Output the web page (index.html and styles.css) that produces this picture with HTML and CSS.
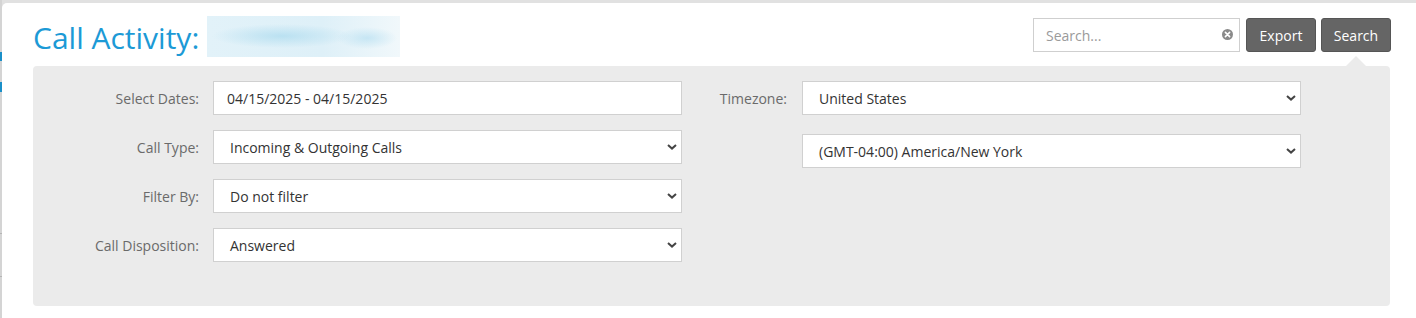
FILE: index.html
```html
<!DOCTYPE html>
<html lang="en">
<head>
<meta charset="utf-8">
<title>Call Activity</title>
<link rel="stylesheet" href="styles.css">
</head>
<body>
<div class="page">
  <div class="gutter">
    <span class="gutter-blue gutter-blue-a"></span>
    <span class="gutter-blue gutter-blue-b"></span>
    <span class="gutter-line gutter-line-a"></span>
    <span class="gutter-line gutter-line-b"></span>
  </div>
  <div class="card">
    <div class="header">
      <div class="title-wrap">
        <h1 class="title">Call Activity:</h1>
        <div class="blurred"></div>
      </div>
      <div class="actions">
        <div class="search-box">
          <input class="search-input" type="text" placeholder="Search...">
          <span class="clear-icon">
            <svg width="11" height="11" viewBox="0 0 11 11"><circle cx="5.5" cy="5.5" r="5.5" fill="#8a8a8a"/><path d="M3.4 3.4 L7.6 7.6 M7.6 3.4 L3.4 7.6" stroke="#fff" stroke-width="1.6" stroke-linecap="round"/></svg>
          </span>
        </div>
        <button class="btn">Export</button>
        <button class="btn btn-search">Search</button>
      </div>
    </div>
    <div class="panel">
      <div class="col col-left">
        <div class="row">
          <label class="label">Select Dates:</label>
          <div class="field text-field">04/15/2025 - 04/15/2025</div>
        </div>
        <div class="row">
          <label class="label">Call Type:</label>
          <div class="field select-field">Incoming &amp; Outgoing Calls</div>
        </div>
        <div class="row">
          <label class="label">Filter By:</label>
          <div class="field select-field">Do not filter</div>
        </div>
        <div class="row">
          <label class="label">Call Disposition:</label>
          <div class="field select-field">Answered</div>
        </div>
      </div>
      <div class="col col-right">
        <div class="row">
          <label class="label label-right">Timezone:</label>
          <div class="field select-field wide">United States</div>
        </div>
        <div class="row">
          <label class="label label-right"></label>
          <div class="field select-field wide">(GMT-04:00) America/New York</div>
        </div>
      </div>
    </div>
  </div>
</div>
</body>
</html>
```

FILE: styles.css
```css
html, body {
  margin: 0;
  padding: 0;
}
body {
  background: #e1e1e1;
  font-family: "Open Sans", "Liberation Sans", sans-serif;
  width: 1416px;
  height: 318px;
  overflow: hidden;
}
.page {
  display: flex;
  height: 318px;
  padding-top: 3px;
  box-sizing: border-box;
}
.gutter {
  width: 2px;
  position: relative;
  background: #d4d4d4;
  margin-top: -3px;
}
.gutter-blue {
  position: absolute;
  left: 0;
  width: 2px;
  background: #1a8fc8;
}
.gutter-blue-a { top: 52px; height: 9px; }
.gutter-blue-b { top: 82px; height: 10px; }
.gutter-line {
  position: absolute;
  left: 0;
  width: 2px;
  height: 1px;
  background: #b5b5b5;
}
.gutter-line-a { top: 233px; }
.gutter-line-b { top: 276px; }
.card {
  flex: 1;
  background: #fff;
  border-top-left-radius: 5px;
  padding: 15px 26px 0 31px;
  box-sizing: border-box;
}
.header {
  display: flex;
  justify-content: space-between;
  align-items: flex-start;
  height: 48px;
}
.title-wrap {
  display: flex;
  align-items: flex-start;
  gap: 8px;
}
.title {
  margin: 0;
  font-weight: 400;
  font-size: 30px;
  line-height: 42px;
  color: #1c9ad6;
  margin-top: -1px;
}
.blurred {
  width: 193px;
  height: 41px;
  margin-top: -2px;
  background:
    radial-gradient(ellipse 70px 12px at 75px 20px, rgba(170, 218, 238, 0.7), rgba(190, 228, 244, 0) 100%),
    radial-gradient(ellipse 30px 11px at 160px 22px, rgba(175, 220, 240, 0.6), rgba(190, 228, 244, 0) 100%),
    linear-gradient(90deg, #e2f2f9, #def0f8 60%, #f1f8fb);
}
.actions {
  display: flex;
  gap: 5px;
  margin-right: -1px;
}
.search-box {
  position: relative;
  width: 207px;
  height: 34px;
  margin-right: 1px;
}
.search-input {
  width: 100%;
  height: 100%;
  box-sizing: border-box;
  border: 1px solid #cfcfcf;
  padding: 0 28px 0 12px;
  font-family: inherit;
  font-size: 14px;
  color: #333;
  outline: none;
}
.search-input::placeholder {
  color: #9a9a9a;
}
.clear-icon {
  position: absolute;
  right: 7px;
  top: 11px;
  width: 11px;
  height: 11px;
  display: block;
  line-height: 0;
}
.btn {
  width: 70px;
  height: 34px;
  box-sizing: border-box;
  border: 1px solid #555;
  border-radius: 3px;
  background: #656565;
  color: #fff;
  font-family: inherit;
  font-size: 14px;
  padding: 0;
  position: relative;
}
.btn-search::after {
  content: "";
  position: absolute;
  left: 23px;
  top: 37px;
  border-left: 11px solid transparent;
  border-right: 11px solid transparent;
  border-bottom: 11px solid #ebebeb;
}
.panel {
  background: #ebebeb;
  border-radius: 4px;
  height: 240px;
  box-sizing: border-box;
  padding-top: 15px;
  display: flex;
}
.col {
  display: flex;
  flex-direction: column;
}
.col-left {
  gap: 15px;
  width: 649px;
}
.col-right {
  gap: 19px;
  margin-left: 15px;
}
.row {
  display: flex;
  align-items: center;
  gap: 14px;
}
.label {
  width: 166px;
  text-align: right;
  font-size: 14px;
  color: #6a6a6a;
}
.label-right {
  width: 90px;
}
.col-right .row {
  gap: 15px;
}
.field {
  width: 469px;
  height: 34px;
  box-sizing: border-box;
  border: 1px solid #d0d0d0;
  background: #fff;
  font-size: 14px;
  color: #333;
  line-height: 33px;
  padding-left: 13px;
  white-space: nowrap;
}
.select-field {
  padding-left: 16px;
  background-image: url("data:image/svg+xml;utf8,<svg xmlns='http://www.w3.org/2000/svg' width='10' height='6' viewBox='0 0 10 6'><path d='M1 1 L5 4.6 L9 1' fill='none' stroke='%23444' stroke-width='2'/></svg>");
  background-repeat: no-repeat;
  background-position: right 4px center;
}
.wide {
  width: 499px;
}
```
